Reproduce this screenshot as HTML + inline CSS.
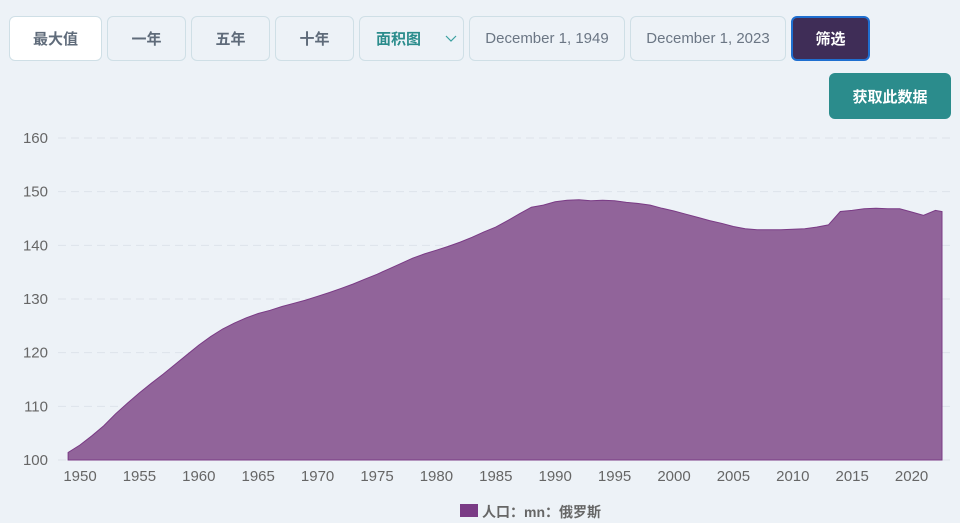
<!DOCTYPE html>
<html><head><meta charset="utf-8"><style>
body{margin:0;width:960px;height:523px;background:#edf2f7;font-family:"Liberation Sans","Noto Sans CJK SC",sans-serif;position:relative;overflow:hidden}
.b{position:absolute;top:16px;height:43px;border:1px solid #cfdfe6;border-radius:6px;box-sizing:content-box;display:flex;align-items:center;justify-content:center;font-size:15px;font-weight:bold;color:#5f6b7a}
</style></head><body>
<div class="b" style="left:9px;width:91px;background:#fff">最大值</div>
<div class="b" style="left:107px;width:77px">一年</div>
<div class="b" style="left:191px;width:77px">五年</div>
<div class="b" style="left:275px;width:77px">十年</div>
<div class="b" style="left:359px;width:103px;justify-content:flex-start;color:#2b8c8c"><span style="margin-left:16px">面积图</span><svg style="position:absolute;right:6px;top:18px" width="12" height="8"><path d="M1 1L6 6L11 1" fill="none" stroke="#3aa0a0" stroke-width="1.2"/></svg></div>
<div class="b" style="left:469px;width:154px;font-weight:normal;font-size:15px;color:#6b7684">December 1, 1949</div>
<div class="b" style="left:630px;width:154px;font-weight:normal;font-size:15px;color:#6b7684">December 1, 2023</div>
<div class="b" style="left:791px;width:75px;background:#3f2d57;border:2px solid #1f6fd0;height:41px;color:#fff">筛选</div>
<div class="b" style="left:829px;top:73px;width:122px;height:46px;border:none;background:#2b8c8c;color:#fff">获取此数据</div>
<svg id="c" style="position:absolute;left:0;top:0" width="960" height="523"></svg>
<div style="position:absolute;left:460px;top:504px;width:18px;height:13px;background:#7a3b85"></div>
<div style="position:absolute;left:482px;top:502px;font-size:14px;font-weight:bold;color:#666">人口：mn：俄罗斯</div>
<script>
var v=[101.4,102.8,104.5,106.4,108.6,110.6,112.5,114.3,116.0,117.8,119.6,121.4,123.0,124.4,125.5,126.5,127.3,127.9,128.6,129.2,129.8,130.5,131.2,132.0,132.8,133.7,134.6,135.6,136.6,137.6,138.4,139.1,139.8,140.6,141.5,142.5,143.4,144.6,145.9,147.1,147.5,148.1,148.4,148.5,148.3,148.4,148.3,148.0,147.8,147.5,146.9,146.4,145.8,145.2,144.6,144.1,143.5,143.1,142.9,142.9,142.9,143.0,143.1,143.4,143.8,146.3,146.5,146.8,146.9,146.8,146.8,146.2,145.6,146.5,146.3];
function X(y){return Math.min(942,80+(y-1950)*11.88)}function Y(p){return 460-(p-100)*5.367}
var s='';
for(var g=100;g<=160;g+=10){var yy=Y(g);s+='<line x1="58" x2="950" y1="'+yy+'" y2="'+yy+'" stroke="#dde3ea" stroke-dasharray="8,5"/>';s+='<text x="48" y="'+(yy+5)+'" text-anchor="end" font-size="15" fill="#666">'+g+'</text>';}
var d='M'+X(1949)+' '+Y(100);
for(var i=0;i<v.length;i++)d+=' L'+X(1949+i).toFixed(1)+' '+Y(v[i]).toFixed(1);
d+=' L'+X(2023)+' '+Y(100)+'Z';
s+='<path d="'+d+'" fill="#91649a" stroke="#7a3b85" stroke-width="1"/>';
for(var yr=1950;yr<=2020;yr+=5)s+='<text x="'+X(yr)+'" y="481" text-anchor="middle" font-size="15" fill="#666">'+yr+'</text>';
document.getElementById('c').innerHTML=s;
</script>
</body></html>
